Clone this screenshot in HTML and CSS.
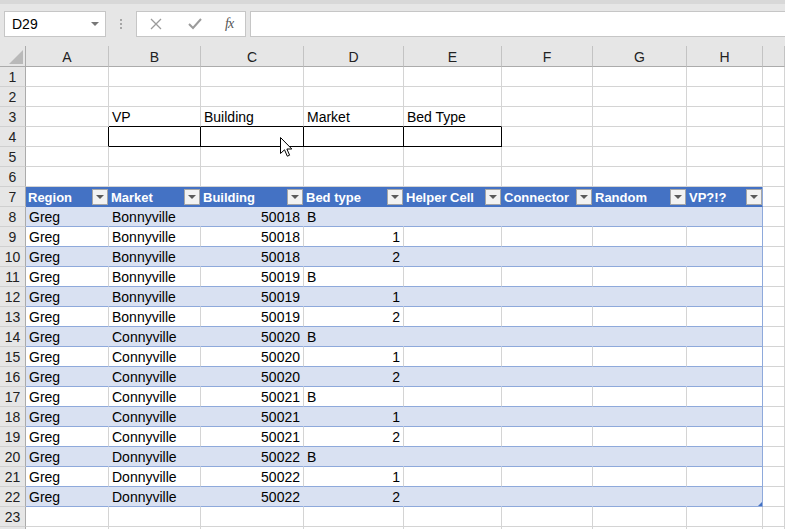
FILE: index.html
```html
<!DOCTYPE html>
<html lang="en">
<head>
    <meta charset="UTF-8">
    <meta name="viewport" content="width=device-width, initial-scale=1.0">
    <title>Book1 - Excel</title>
    <link rel="stylesheet" href="styles.css">
</head>
<body>
    <div class="topbar">
        <div class="namebox"><span>D29</span><span class="nb-arrow"></span></div>
        <div class="grip"><i></i><i></i><i></i></div>
        <div class="fbuttons">
            <svg class="fx-cancel" width="12" height="12" viewBox="0 0 12 12"><path d="M1 1 L11 11 M11 1 L1 11" stroke="#9b9b9b" stroke-width="1.3" fill="none"/></svg>
            <svg class="fx-ok" width="14" height="12" viewBox="0 0 14 12"><path d="M1 6 L5 10 L13 1" stroke="#9b9b9b" stroke-width="2" fill="none"/></svg>
            <span class="fx">fx</span>
        </div>
        <div class="formula"></div>
    </div>

    <div class="grid" id="grid"></div>

    <svg class="cursor" width="13" height="21" viewBox="0 0 13 21">
        <path d="M0.5 0.5 L0.5 16.5 L4.5 12.8 L7.3 19.2 L9.6 18.2 L6.9 12 L11.8 12 Z" fill="#fff" stroke="#000" stroke-width="1"/>
    </svg>

    <script>
        const cols = ['A', 'B', 'C', 'D', 'E', 'F', 'G', 'H', ''];
        const headers = ['Region', 'Market', 'Building', 'Bed type', 'Helper Cell', 'Connector', 'Random', 'VP?!?'];
        const towns = ['Bonnyville', 'Bonnyville', 'Connyville', 'Connyville', 'Donnyville'];
        const data = [];
        towns.forEach((town, i) => {
            ['B', 1, 2].forEach(bed => data.push(['Greg', town, 50018 + i, bed]));
        });

        let html = '<div class="c corner"><span class="tri"></span></div>';
        cols.forEach(c => { html += `<div class="c colhead">${c}</div>`; });

        // row 24 is only a sliver at the bottom edge, so no number
        for (let r = 1; r <= 24; r++) {
            html += `<div class="c rowhead">${r < 24 ? r : ''}</div>`;
            for (let c = 0; c < 9; c++) {
                let cls = 'c';
                let text = '';
                if (r === 3 && c >= 1 && c <= 4) {
                    cls += ' lbl';
                    text = ['VP', 'Building', 'Market', 'Bed Type'][c - 1];
                }
                if (r === 4 && c >= 1 && c <= 4) cls += ' box';
                if (r === 4 && c === 0) cls += ' box-left';
                if (r === 7 && c < 8) {
                    cls += ' th';
                    text = headers[c] + '<span class="dd"></span>';
                }
                if (r >= 8 && r <= 22 && c < 8) {
                    cls += (r % 2 === 0) ? ' band' : ' plain';
                    const val = data[r - 8][c];
                    if (val !== undefined) {
                        text = val;
                        if (typeof val === 'number') cls += ' num';
                    }
                    if (r === 22 && c === 7) text = '<span class="handle"></span>';
                }
                if (r >= 7 && r <= 22 && c === 7) cls += ' edge';
                html += `<div class="${cls}">${text}</div>`;
            }
        }
        document.getElementById('grid').innerHTML = html;
    </script>
</body>
</html>
```

FILE: styles.css
```css
body {
    margin: 0;
    background-color: #fff;
    font-family: 'Liberation Sans', Arial, sans-serif;
    font-size: 14px;
    color: #000;
    overflow: hidden;
    position: relative;
    height: 529px;
}

/* formula bar */
.topbar {
    box-sizing: border-box;
    height: 46px;
    background-color: #e6e6e6;
    border-top: 4px solid #d8d8d8;
    padding-top: 7px;
    display: flex;
    align-items: flex-start;
}

.namebox {
    box-sizing: border-box;
    width: 102px;
    height: 26px;
    margin-left: 4px;
    background-color: #fff;
    border: 1px solid #c6c6c6;
    display: flex;
    align-items: center;
    justify-content: space-between;
    padding: 0 6px 0 7px;
    font-size: 14px;
}

.nb-arrow {
    width: 0;
    height: 0;
    border-left: 4px solid transparent;
    border-right: 4px solid transparent;
    border-top: 4px solid #777;
}

.grip {
    width: 30px;
    height: 26px;
    display: flex;
    flex-direction: column;
    align-items: center;
    justify-content: center;
    gap: 2px;
}

.grip i {
    width: 2px;
    height: 2px;
    background-color: #a6a6a6;
}

.fbuttons {
    box-sizing: border-box;
    width: 110px;
    height: 26px;
    background-color: #fff;
    border: 1px solid #c6c6c6;
    display: flex;
    align-items: center;
    padding-left: 13px;
}

.fx-ok {
    margin-left: 26px;
}

.fx {
    margin-left: 23px;
    font-family: 'Liberation Serif', 'Times New Roman', serif;
    font-style: italic;
    font-size: 14px;
    color: #555;
    letter-spacing: -1px;
}

.formula {
    box-sizing: border-box;
    flex: 1;
    height: 26px;
    margin-left: 4px;
    background-color: #fff;
    border: 1px solid #c6c6c6;
    border-right: none;
}

/* sheet grid */
.grid {
    display: grid;
    grid-template-columns: 26px 83px 92px 103px 100px 98px 91px 94px 76px 1fr;
    grid-template-rows: 21px;
    grid-auto-rows: 20px;
}

.c {
    box-sizing: border-box;
    border-right: 1px solid #d4d4d4;
    border-bottom: 1px solid #d4d4d4;
    padding: 1px 3px 0;
    line-height: 19px;
    white-space: nowrap;
    overflow: hidden;
    position: relative;
}

.corner {
    background-color: #e6e6e6;
    border-right: 1px solid #ababab;
    border-bottom: 1px solid #ababab;
}

.corner .tri {
    position: absolute;
    right: 2px;
    bottom: 2px;
    width: 0;
    height: 0;
    border-left: 14px solid transparent;
    border-bottom: 14px solid #b9b9b9;
}

.colhead {
    background-color: #e6e6e6;
    text-align: center;
    color: #222;
    line-height: 21px;
    border-right: 1px solid #c3c3c3;
    border-bottom: 1px solid #ababab;
}

.rowhead {
    background-color: #e6e6e6;
    text-align: center;
    color: #222;
    padding: 1px 0 0;
    border-right: 1px solid #ababab;
    border-bottom: 1px solid #d0d0d0;
}

.lbl {
    border-bottom-color: #000;
}

.box {
    border-right-color: #000;
    border-bottom-color: #000;
}

.box-left {
    border-right-color: #000;
}

/* table */
.th {
    background-color: #4472c4;
    color: #fff;
    font-weight: bold;
    font-size: 13px;
    border-right-color: #4472c4;
    border-bottom-color: #4472c4;
    padding-left: 2px;
}

.dd {
    position: absolute;
    right: 0;
    top: 2px;
    box-sizing: border-box;
    width: 16px;
    height: 16px;
    background-color: #f2f2f2;
    border: 1px solid #a6a6a6;
}

.dd::after {
    content: '';
    position: absolute;
    left: 3px;
    top: 5px;
    border-left: 4px solid transparent;
    border-right: 4px solid transparent;
    border-top: 4px solid #5a5a5a;
}

.plain {
    border-bottom-color: #8ea9db;
}

.band {
    background-color: #d9e1f2;
    border-right-color: #d9e1f2;
    border-bottom-color: #8ea9db;
}

.num {
    text-align: right;
}

.edge {
    border-right-color: #8ea9db;
}

.handle {
    position: absolute;
    right: 0;
    bottom: 0;
    width: 0;
    height: 0;
    border-left: 4px solid transparent;
    border-bottom: 4px solid #4472c4;
}

.cursor {
    position: absolute;
    left: 280px;
    top: 137px;
}
```
